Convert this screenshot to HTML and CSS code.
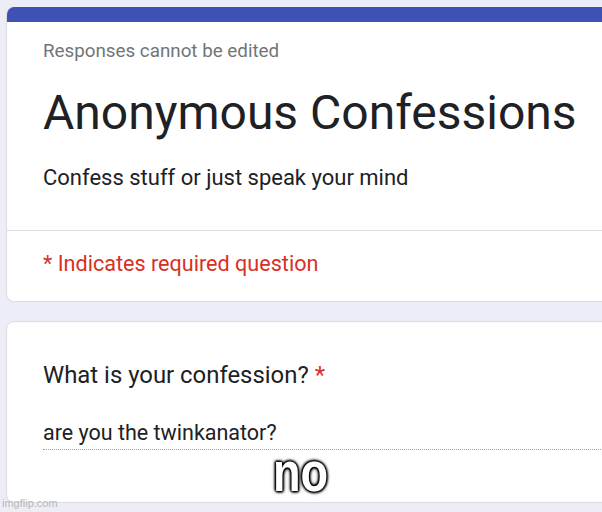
FILE: index.html
```html
<!DOCTYPE html>
<html lang="en">
<head>
  <meta charset="UTF-8">
  <title>Anonymous Confessions</title>
  <link rel="stylesheet" href="styles.css">
</head>
<body>

<div class="page">
  <div class="card header-card">
    <div class="top-bar"></div>
    <div class="header-main">
      <div class="note">Responses cannot be edited</div>
      <h1 class="title">Anonymous Confessions</h1>
      <div class="desc">Confess stuff or just speak your mind</div>
    </div>
    <div class="required">* Indicates required question</div>
  </div>

  <div class="card question-card">
    <div class="question">What is your confession? <span class="star">*</span></div>
    <div class="answer">are you the twinkanator?</div>
  </div>
</div>

<div class="meme-text">no</div>
<div class="watermark">imgflip.com</div>

</body>
</html>
```

FILE: styles.css
```css
html, body {
  margin: 0;
  padding: 0;
  height: 100%;
  overflow: hidden;
}

body {
  font-family: Roboto, "Liberation Sans", sans-serif;
  background-color: #ecedf6;
  color: #202124;
  position: relative;
}

.page {
  padding: 7px 0 0 6px;
  width: 640px;
  display: flex;
  flex-direction: column;
  gap: 19px;
}

.card {
  background: #fff;
  border: 1px solid #dadce0;
  border-radius: 8px;
  overflow: hidden;
}

.header-card {
  height: 294px;
  border-top: none;
}

.top-bar {
  height: 15px;
  background: #3f51b5;
}

.header-main {
  box-sizing: border-box;
  padding: 18px 36px 0;
  height: 209px;
  border-bottom: 1px solid #dadce0;
}

.note {
  font-size: 18.8px;
  color: #70757a;
  line-height: 22px;
}

.title {
  font-size: 48px;
  font-weight: 400;
  margin: 23px 0 0;
  line-height: 56px;
}

.desc {
  font-size: 22px;
  margin-top: 23.5px;
  line-height: 26px;
}

.required {
  padding: 20px 36px 0;
  font-size: 21.6px;
  color: #d93025;
  line-height: 26px;
}

.question-card {
  height: 180px;
  padding: 0 0 0 36px;
}

.question {
  font-size: 23.9px;
  margin-top: 39px;
  line-height: 28px;
}

.star {
  color: #d93025;
}

.answer {
  font-size: 21.5px;
  margin-top: 31px;
  line-height: 26px;
  padding-bottom: 3px;
  border-bottom: 1px dotted #9aa0a6;
}

.meme-text {
  position: absolute;
  left: 273px;
  top: 445px;
  font-family: "Liberation Sans", sans-serif;
  font-weight: bold;
  font-size: 55px;
  line-height: 55px;
  color: #fff;
  transform: scaleX(0.82);
  transform-origin: left top;
  text-shadow: 0 0 2px #000, 0 0 2px #000, 0 0 3px #000, 0 0 3px #000, 0 0 5px #000, 1px 1px 3px #000, -1px -1px 3px #000;
}

.watermark {
  position: absolute;
  left: 2px;
  top: 497px;
  font-family: "Liberation Sans", sans-serif;
  font-size: 11px;
  line-height: 12px;
  color: #b8b8b8;
}
```
